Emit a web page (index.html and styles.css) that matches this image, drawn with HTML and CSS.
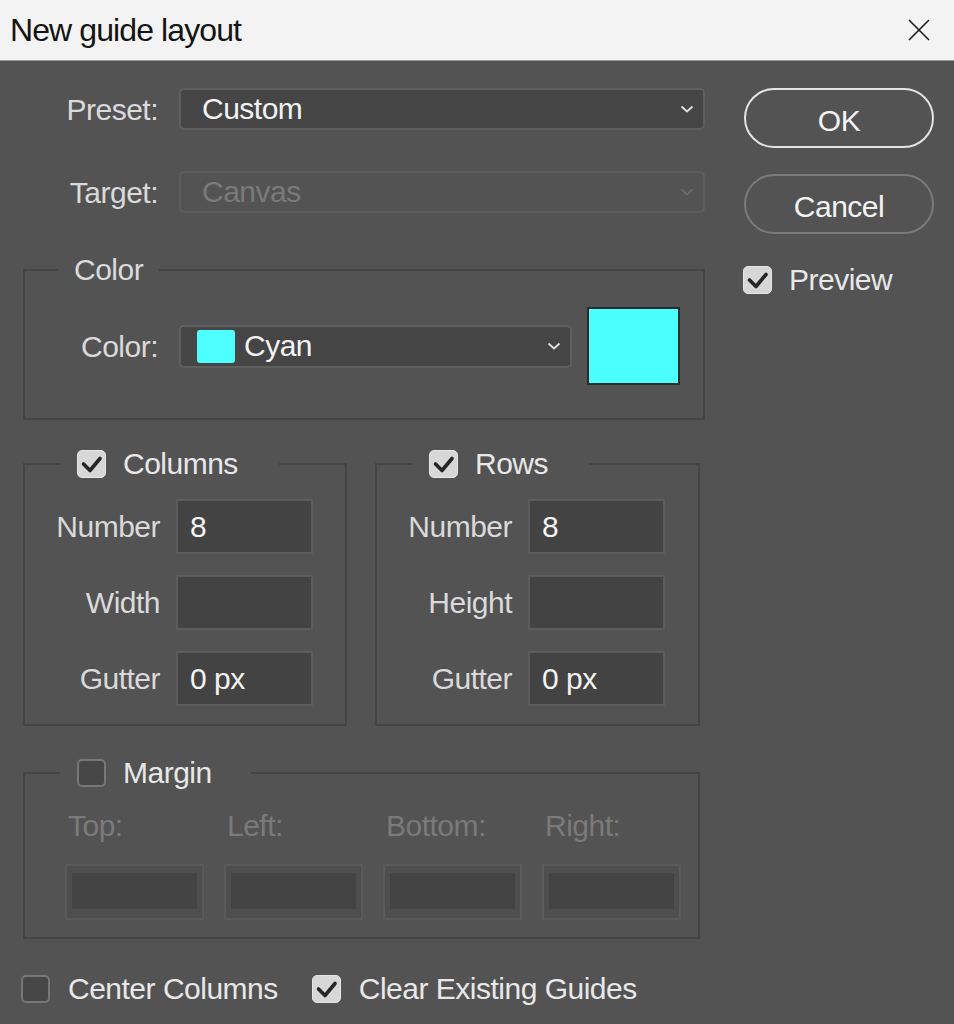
FILE: index.html
```html
<!DOCTYPE html>
<html lang="en">
<head>
  <meta charset="UTF-8">
  <meta name="viewport" content="width=device-width, initial-scale=1.0">
  <title>New guide layout</title>
  <link rel="stylesheet" href="styles.css">
</head>
<body>

  <!-- Window title bar -->
  <div class="titlebar">
    <span class="title">New guide layout</span>
    <svg class="close" width="24" height="24" viewBox="0 0 24 24">
      <path d="M2 2 L22 22 M22 2 L2 22" stroke="#1a1a1a" stroke-width="1.6" fill="none"/>
    </svg>
  </div>

  <div class="dialog">
    <div class="main">

      <div class="field-row">
        <span class="lbl">Preset:</span>
        <div class="select">
          <span>Custom</span>
          <svg class="chev" width="14" height="8" viewBox="0 0 14 8"><path d="M1.5 1.5 L7 6.5 L12.5 1.5" stroke="#e0e0e0" stroke-width="1.8" fill="none"/></svg>
        </div>
      </div>

      <div class="field-row">
        <span class="lbl">Target:</span>
        <div class="select disabled">
          <span>Canvas</span>
          <svg class="chev" width="14" height="8" viewBox="0 0 14 8"><path d="M1.5 1.5 L7 6.5 L12.5 1.5" stroke="#6c6c6c" stroke-width="1.8" fill="none"/></svg>
        </div>
      </div>

      <!-- Color group -->
      <fieldset class="group color-group">
        <legend class="plain">Color</legend>
        <div class="color-row">
          <span class="lbl color-lbl">Color:</span>
          <div class="select color-select">
            <span class="pick"><span class="mini-swatch"></span>Cyan</span>
            <svg class="chev" width="14" height="8" viewBox="0 0 14 8"><path d="M1.5 1.5 L7 6.5 L12.5 1.5" stroke="#e0e0e0" stroke-width="1.8" fill="none"/></svg>
          </div>
          <div class="swatch"></div>
        </div>
      </fieldset>

      <!-- Columns / Rows -->
      <div class="pair">
        <fieldset class="group cols">
          <legend class="check-legend">
            <span class="legend-inner">
              <span class="cb on"><svg width="27" height="26" viewBox="0 0 27 26"><path d="M5.5 13 L12 19.5 L22 7.5" stroke="#262626" stroke-width="3.6" fill="none" stroke-linecap="round" stroke-linejoin="round"/></svg></span>
              <span>Columns</span>
            </span>
          </legend>
          <div class="fields">
            <span class="flbl">Number</span><div class="box">8</div>
            <span class="flbl">Width</span><div class="box"></div>
            <span class="flbl">Gutter</span><div class="box">0 px</div>
          </div>
        </fieldset>

        <fieldset class="group rows">
          <legend class="check-legend">
            <span class="legend-inner">
              <span class="cb on"><svg width="27" height="26" viewBox="0 0 27 26"><path d="M5.5 13 L12 19.5 L22 7.5" stroke="#262626" stroke-width="3.6" fill="none" stroke-linecap="round" stroke-linejoin="round"/></svg></span>
              <span>Rows</span>
            </span>
          </legend>
          <div class="fields">
            <span class="flbl">Number</span><div class="box">8</div>
            <span class="flbl">Height</span><div class="box"></div>
            <span class="flbl">Gutter</span><div class="box">0 px</div>
          </div>
        </fieldset>
      </div>

      <!-- Margin group (disabled) -->
      <fieldset class="group margin-group">
        <legend class="check-legend margin-legend">
          <span class="legend-inner">
            <span class="cb off"></span>
            <span>Margin</span>
          </span>
        </legend>
        <div class="margin-grid">
          <span class="mlbl">Top:</span>
          <span class="mlbl">Left:</span>
          <span class="mlbl">Bottom:</span>
          <span class="mlbl">Right:</span>
          <div class="mbox"><div class="mbox-in"></div></div>
          <div class="mbox"><div class="mbox-in"></div></div>
          <div class="mbox"><div class="mbox-in"></div></div>
          <div class="mbox"><div class="mbox-in"></div></div>
        </div>
      </fieldset>

    </div>

    <!-- Buttons -->
    <div class="side">
      <div class="btn ok">OK</div>
      <div class="btn cancel">Cancel</div>
      <div class="check-item preview">
        <span class="cb on"><svg width="27" height="26" viewBox="0 0 27 26"><path d="M5.5 13 L12 19.5 L22 7.5" stroke="#262626" stroke-width="3.6" fill="none" stroke-linecap="round" stroke-linejoin="round"/></svg></span>
        <span>Preview</span>
      </div>
    </div>
  </div>

  <div class="footer">
    <div class="check-item">
      <span class="cb off"></span>
      <span>Center Columns</span>
    </div>
    <div class="check-item clear-guides">
      <span class="cb on"><svg width="27" height="26" viewBox="0 0 27 26"><path d="M5.5 13 L12 19.5 L22 7.5" stroke="#262626" stroke-width="3.6" fill="none" stroke-linecap="round" stroke-linejoin="round"/></svg></span>
      <span>Clear Existing Guides</span>
    </div>
  </div>

</body>
</html>
```

FILE: styles.css
```css
body {
  margin: 0;
  width: 954px;
  height: 1024px;
  overflow: hidden;
  background-color: #535353;
  color: #dadada;
  font-family: "Liberation Sans", Arial, sans-serif;
  font-size: 30px;
  letter-spacing: -0.5px;
  line-height: 30px;
}

/* Title bar */
.titlebar {
  height: 60px;
  background-color: #f3f3f3;
  border-bottom: 1px solid #9a9a9a;
  display: flex;
  align-items: center;
  justify-content: space-between;
  padding: 0 23px 0 10px;
}

.title {
  font-size: 32px;
  letter-spacing: -0.9px;
  color: #141414;
}

.dialog {
  display: flex;
  padding: 27px 0 0 23px;
}

.main {
  width: 682px;
}

.side {
  width: 190px;
  margin-left: 39px;
}

/* Label + dropdown rows */
.field-row {
  display: flex;
  align-items: center;
  height: 42px;
}

.field-row + .field-row {
  margin-top: 41px;
}

.lbl {
  width: 135px;
  margin-right: 21px;
  padding-top: 2px;
  text-align: right;
}

.select {
  flex: 1;
  height: 42px;
  box-sizing: border-box;
  display: flex;
  align-items: center;
  justify-content: space-between;
  padding: 0 9px 0 21px;
  border: 2px solid #5f5f5f;
  border-radius: 5px;
  background-color: #454545;
  color: #f3f3f3;
}

.select.disabled {
  background-color: #535353;
  border-color: #5d5d5d;
  color: #7a7a7a;
}

/* Group boxes */
.group {
  margin: 0;
  padding: 0;
  border: 2px solid #444;
  min-width: 0;
  box-sizing: border-box;
}

.group legend {
  padding: 0 16px;
  margin-left: 33px;
  height: 30px;
  line-height: 30px;
}

.color-group {
  margin-top: 42px;
  padding: 22px 0 33px 0;
}

.color-row {
  display: flex;
  align-items: center;
}

.color-lbl {
  width: 133px;
}

.color-select {
  flex: none;
  width: 393px;
  height: 43px;
  padding-left: 16px;
}

.pick {
  display: flex;
  align-items: center;
}

.mini-swatch {
  width: 38px;
  height: 33px;
  margin-right: 9px;
  border-radius: 3px;
  background-color: #4effff;
}

.swatch {
  width: 93px;
  height: 78px;
  margin-left: 15px;
  box-sizing: border-box;
  border: 2px solid #2b2b2b;
  background-color: #4cffff;
}

/* Columns and rows */
.pair {
  display: flex;
  gap: 28px;
  margin-top: 29px;
}

.cols {
  width: 324px;
}

.rows {
  width: 325px;
}

.group .check-legend {
  margin-left: 35px;
  padding: 0 41px 0 17px;
}

.legend-inner {
  display: inline-flex;
  align-items: center;
  gap: 17px;
  height: 30px;
  color: #e8e8e8;
}

.fields {
  display: grid;
  grid-template-columns: 135px 137px;
  column-gap: 16px;
  row-gap: 21px;
  align-items: center;
  padding: 20px 0 18px 0;
}

.flbl {
  text-align: right;
}

.box {
  height: 55px;
  box-sizing: border-box;
  display: flex;
  align-items: center;
  padding-left: 12px;
  border: 2px solid #5c5c5c;
  background-color: #434343;
  color: #f3f3f3;
}

/* Margin */
.margin-group {
  width: 677px;
  margin-top: 32px;
}

.group .margin-legend {
  padding-right: 39px;
}

.margin-grid {
  display: grid;
  grid-template-columns: repeat(4, 139px);
  column-gap: 20px;
  row-gap: 23px;
  padding: 23px 0 17px 40px;
}

.mlbl {
  padding-left: 3px;
  color: #7a7a7a;
}

.mbox {
  height: 56px;
  box-sizing: border-box;
  padding: 7px 5px 9px 5px;
  border: 2px solid #5a5a5a;
  background-color: #4e4e4e;
}

.mbox-in {
  height: 100%;
  background-color: #444;
}

/* Checkboxes */
.cb {
  width: 29px;
  height: 28px;
  box-sizing: border-box;
  border-radius: 5px;
  display: flex;
  align-items: center;
  justify-content: center;
  flex: none;
}

.cb.on {
  background-color: #d7d7d7;
  border: 1px solid #e6e6e6;
}

.cb.off {
  background-color: #474747;
  border: 2px solid #777;
}

.check-item {
  display: flex;
  align-items: center;
  gap: 18px;
  height: 30px;
  color: #e8e8e8;
}

/* Buttons */
.btn {
  height: 60px;
  box-sizing: border-box;
  display: flex;
  align-items: center;
  justify-content: center;
  padding-top: 5px;
  border: 2px solid #e4e4e4;
  border-radius: 30px;
  color: #f3f3f3;
}

.btn.cancel {
  margin-top: 26px;
  border-color: #7a7a7a;
}

.preview {
  margin-top: 31px;
  margin-left: -1px;
  gap: 17px;
}

.footer {
  display: flex;
  align-items: center;
  padding: 35px 0 0 21px;
}

.clear-guides {
  margin-left: 34px;
}
```
